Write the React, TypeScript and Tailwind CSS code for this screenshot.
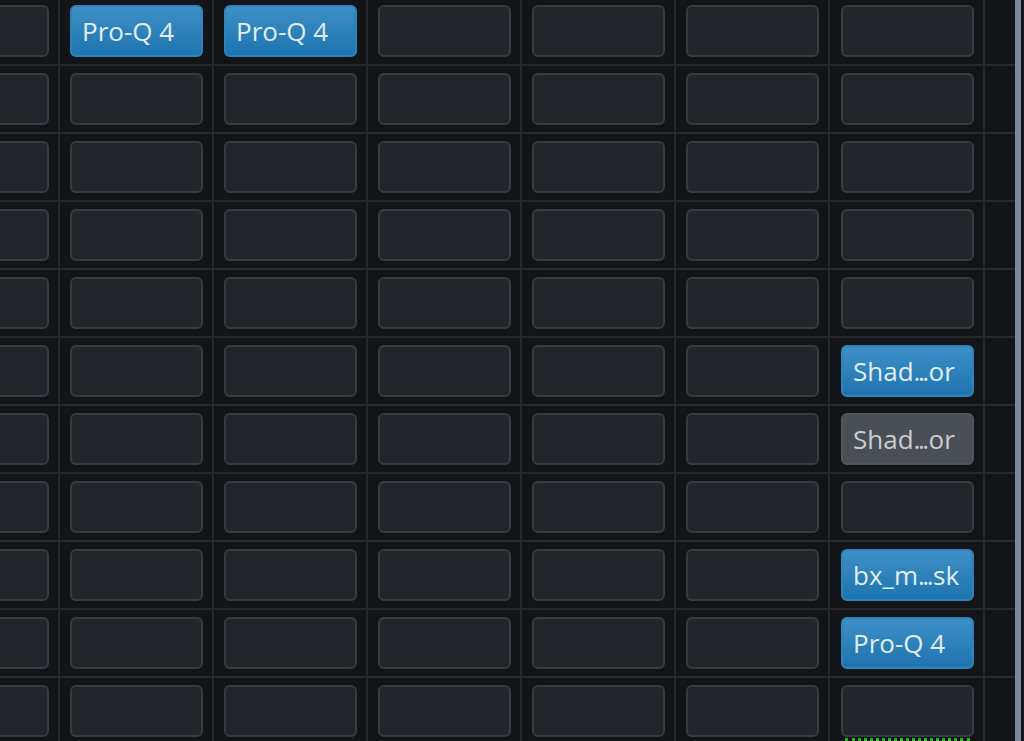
type Slot = { name: string; tone: "blue" | "gray" } | null;

const COLS = 7;
const ROWS = 11;

// inserts per [row][col]; col 0 is the cut-off channel on the left
const inserts: Record<string, Slot> = {
  "0-1": { name: "Pro-Q 4", tone: "blue" },
  "0-2": { name: "Pro-Q 4", tone: "blue" },
  "5-6": { name: "Shad...or", tone: "blue" },
  "6-6": { name: "Shad...or", tone: "gray" },
  "8-6": { name: "bx_m...sk", tone: "blue" },
  "9-6": { name: "Pro-Q 4", tone: "blue" },
};

// tight dots like the host's truncated plugin names
const SlotLabel = ({ name }: { name: string }) => {
  const [head, tail] = name.split("...");
  if (tail === undefined) return <>{name}</>;
  return (
    <>
      {head}
      <span className="tracking-[-2.5px]">...</span>
      <span className="ml-[2px]">{tail}</span>
    </>
  );
};

const InsertSlot = ({ slot }: { slot: Slot }) => {
  if (!slot) {
    return (
      <div className="h-[52px] w-[133px] rounded-[6px] border-2 border-[#363b42] bg-[#212429]" />
    );
  }
  const tone =
    slot.tone === "blue"
      ? "border-[#2f83bb] bg-linear-to-b from-[#3d90c6] to-[#1d74ae] text-[#e2ecf5]"
      : "border-[#50555c] bg-[#4a4f56] text-[#c9cdd2]";
  return (
    <div
      className={`flex h-[52px] w-[133px] items-center whitespace-nowrap rounded-[6px] border-2 pl-[10px] pb-[1px] text-[26px] leading-none ${tone}`}
      style={{ fontFamily: '"Open Sans", "Noto Sans", sans-serif' }}
    >
      <SlotLabel name={slot.name} />
    </div>
  );
};

const App = () => {
  return (
    <div className="flex h-[741px] w-[1024px] overflow-hidden bg-[#131417]">
      <div className="flex-1 overflow-hidden">
        <div className="-mt-[4px] -ml-[96px] flex flex-col">
          {Array.from({ length: ROWS }).map((_, r) => (
            <div key={r} className="flex border-t-2 border-[#262a2e]">
              {Array.from({ length: COLS }).map((_, c) => (
                <div
                  key={c}
                  className={
                    c === COLS - 1
                      ? "w-[155px] shrink-0 border-l-2 border-[#25282c] pt-[7px] pr-[9px] pb-[7px] pl-[11px]"
                      : "w-[154px] shrink-0 border-l-2 border-[#25282c] pt-[7px] pr-[9px] pb-[7px] pl-[10px]"
                  }
                >
                  <InsertSlot slot={inserts[`${r}-${c}`] ?? null} />
                  {r === ROWS - 1 && c === COLS - 1 && (
                    <div className="mx-[4px] mt-[1px] border-t-[3px] border-dotted border-[#14c414]" />
                  )}
                </div>
              ))}
              <div className="w-[33px] shrink-0 border-l-2 border-[#25282c]" />
            </div>
          ))}
        </div>
      </div>
      <div className="flex w-[9px] shrink-0">
        <div className="w-[6px] bg-[#7c8898]" />
        <div className="w-[3px] bg-[#15161a]" />
      </div>
    </div>
  );
};

export default App;
